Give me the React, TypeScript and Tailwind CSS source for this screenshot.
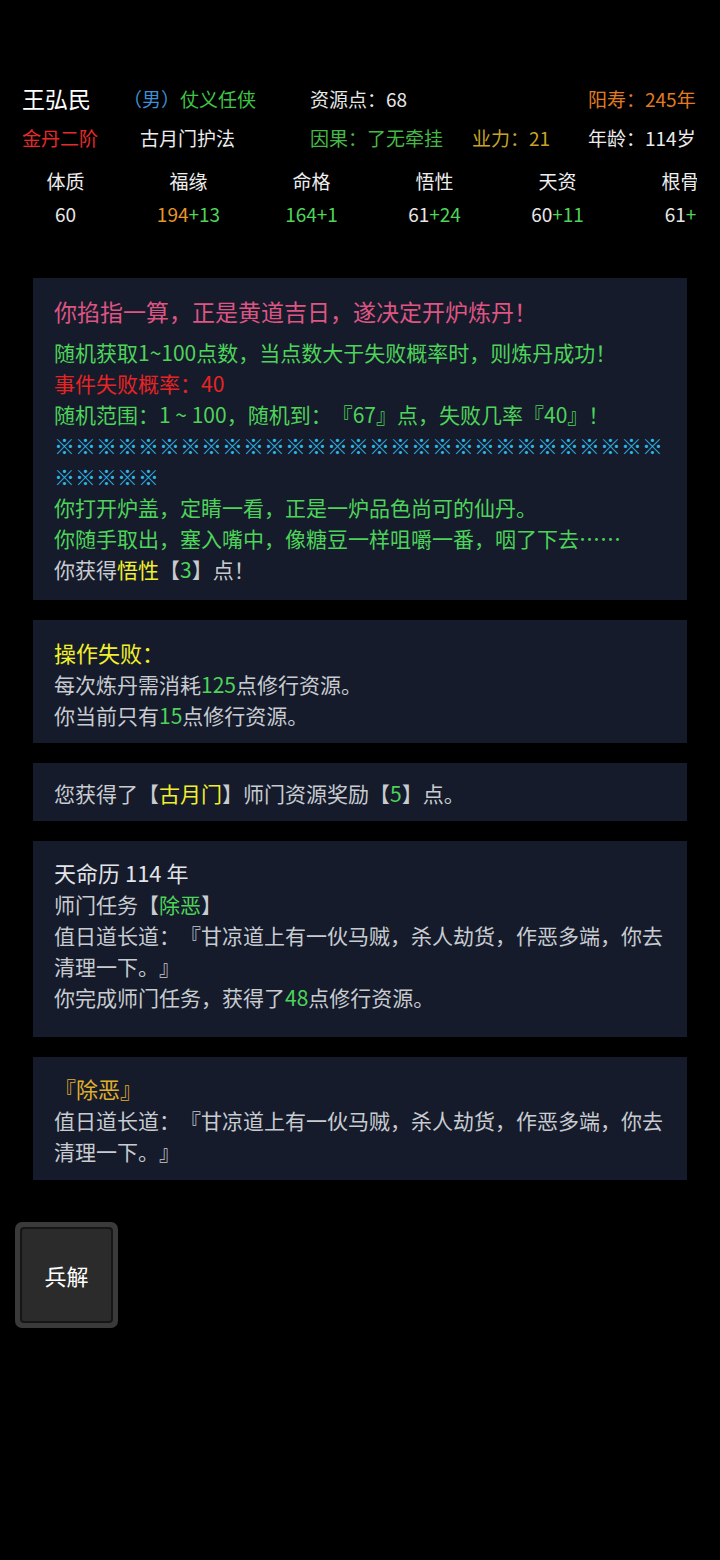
const stats = [
  { label: "体质", base: "60", bonus: "", baseColor: "text-[#e6e6e6]" },
  { label: "福缘", base: "194", bonus: "+13", baseColor: "text-[#e8952a]" },
  { label: "命格", base: "164", bonus: "+1", baseColor: "text-[#4fd35a]" },
  { label: "悟性", base: "61", bonus: "+24", baseColor: "text-[#e6e6e6]" },
  { label: "天资", base: "60", bonus: "+11", baseColor: "text-[#e6e6e6]" },
  { label: "根骨", base: "61", bonus: "+", baseColor: "text-[#e6e6e6]" },
];

function Card({ children }: { children: React.ReactNode }) {
  return (
    <div className="mx-[33px] bg-[#151b2b] px-[21px] pt-[15px] pb-[12px] text-[21px] leading-[31px] text-[#c8cbd0]">
      {children}
    </div>
  );
}

export default function App() {
  return (
    <div className="min-h-[1560px] w-[720px] overflow-hidden bg-black font-['Noto_Sans_CJK_SC',sans-serif] text-[#e6e6e6] [text-spacing-trim:space-all]">
      {/* header */}
      <div className="pt-[79px] pl-[22px] text-[19px] leading-[39px]">
        <div className="flex items-center whitespace-nowrap">
          <span className="w-[101px] text-[23px] text-white">王弘民</span>
          <span className="w-[187px]">
            <span className="text-[#3d8fd6]">（男）</span>
            <span className="text-[#3fc445]">仗义任侠</span>
          </span>
          <span className="w-[278px] text-[#e6e6e6]">资源点：68</span>
          <span className="text-[#e07b22]">阳寿：245年</span>
        </div>
        <div className="flex items-center whitespace-nowrap">
          <span className="w-[118px] text-[#e22b2b]">金丹二阶</span>
          <span className="w-[170px] text-[#ececec]">古月门护法</span>
          <span className="w-[162px] text-[#45b848]">因果：了无牵挂</span>
          <span className="w-[116px] text-[#c9a328]">业力：21</span>
          <span className="text-[#ececec]">年龄：114岁</span>
        </div>
      </div>

      {/* attributes, last column runs past the edge */}
      <div className="mt-[7px] flex w-[697px] overflow-hidden pl-[4px] text-[19px] leading-[33px] whitespace-nowrap">
        {stats.map((s) => (
          <div key={s.label} className="flex w-[123px] shrink-0 flex-col items-center">
            <span className="text-[#eeeeee]">{s.label}</span>
            <span>
              <span className={s.baseColor}>{s.base}</span>
              <span className="text-[#4fd35a]">{s.bonus}</span>
            </span>
          </div>
        ))}
      </div>

      <div className="mt-[48px] flex flex-col gap-[20px]">
        <div className="mx-[33px] bg-[#151b2b] px-[21px] pt-[16px] pb-[15px] text-[21px] leading-[31px] text-[#c8cbd0]">
          <div className="mb-[9px] text-[23px] leading-[34px] text-[#de5582]">
            你掐指一算，正是黄道吉日，遂决定开炉炼丹！
          </div>
          <div className="text-[#4ed35a]">随机获取1~100点数，当点数大于失败概率时，则炼丹成功！</div>
          <div className="text-[#e62424]">事件失败概率：40</div>
          <div className="text-[#4ed35a]">随机范围：1 ~ 100，随机到：『67』点，失败几率『40』！</div>
          <div className="break-all text-[#2fb6e2]">
            ※※※※※※※※※※※※※※※※※※※※※※※※※※※※※※※※※※
          </div>
          <div className="text-[#4ed35a]">你打开炉盖，定睛一看，正是一炉品色尚可的仙丹。</div>
          <div className="text-[#4ed35a]">你随手取出，塞入嘴中，像糖豆一样咀嚼一番，咽了下去……</div>
          <div>
            你获得<span className="text-[#f2f02a]">悟性</span>【<span className="text-[#4ed35a]">3</span>】点！
          </div>
        </div>

        <Card>
          <div className="text-[22px] leading-[34px] text-[#f2f02a]">操作失败：</div>
          <div>
            每次炼丹需消耗<span className="text-[#4ed35a]">125</span>点修行资源。
          </div>
          <div>
            你当前只有<span className="text-[#4ed35a]">15</span>点修行资源。
          </div>
        </Card>

        <Card>
          <div>
            您获得了【<span className="text-[#f2f02a]">古月门</span>】师门资源奖励【<span className="text-[#4ed35a]">5</span>】点。
          </div>
        </Card>

        <div className="mx-[33px] bg-[#151b2b] px-[21px] pt-[14px] pb-[24px] text-[21px] leading-[31px] text-[#c8cbd0]">
          <div className="text-[22px] leading-[34px] text-[#e2e4e8]">天命历 114 年</div>
          <div>
            师门任务【<span className="text-[#4ed35a]">除恶</span>】
          </div>
          <div>值日道长道：『甘凉道上有一伙马贼，杀人劫货，作恶多端，你去清理一下。』</div>
          <div>
            你完成师门任务，获得了<span className="text-[#4ed35a]">48</span>点修行资源。
          </div>
        </div>

        <div className="mx-[33px] bg-[#151b2b] px-[21px] pt-[14px] pb-[13px] text-[21px] leading-[31px] text-[#c8cbd0]">
          <div className="text-[22px] leading-[34px] text-[#e0b02c]">『除恶』</div>
          <div>值日道长道：『甘凉道上有一伙马贼，杀人劫货，作恶多端，你去清理一下。』</div>
        </div>
      </div>

      <div className="mt-[42px] ml-[15px] h-[106px] w-[103px] rounded-[7px] bg-[#3a3a3a] p-[5px]">
        <div className="flex h-full w-full items-center justify-center rounded-[4px] border-2 border-[#161616] bg-[#2b2b2b] text-[22px] text-white">
          兵解
        </div>
      </div>
    </div>
  );
}
